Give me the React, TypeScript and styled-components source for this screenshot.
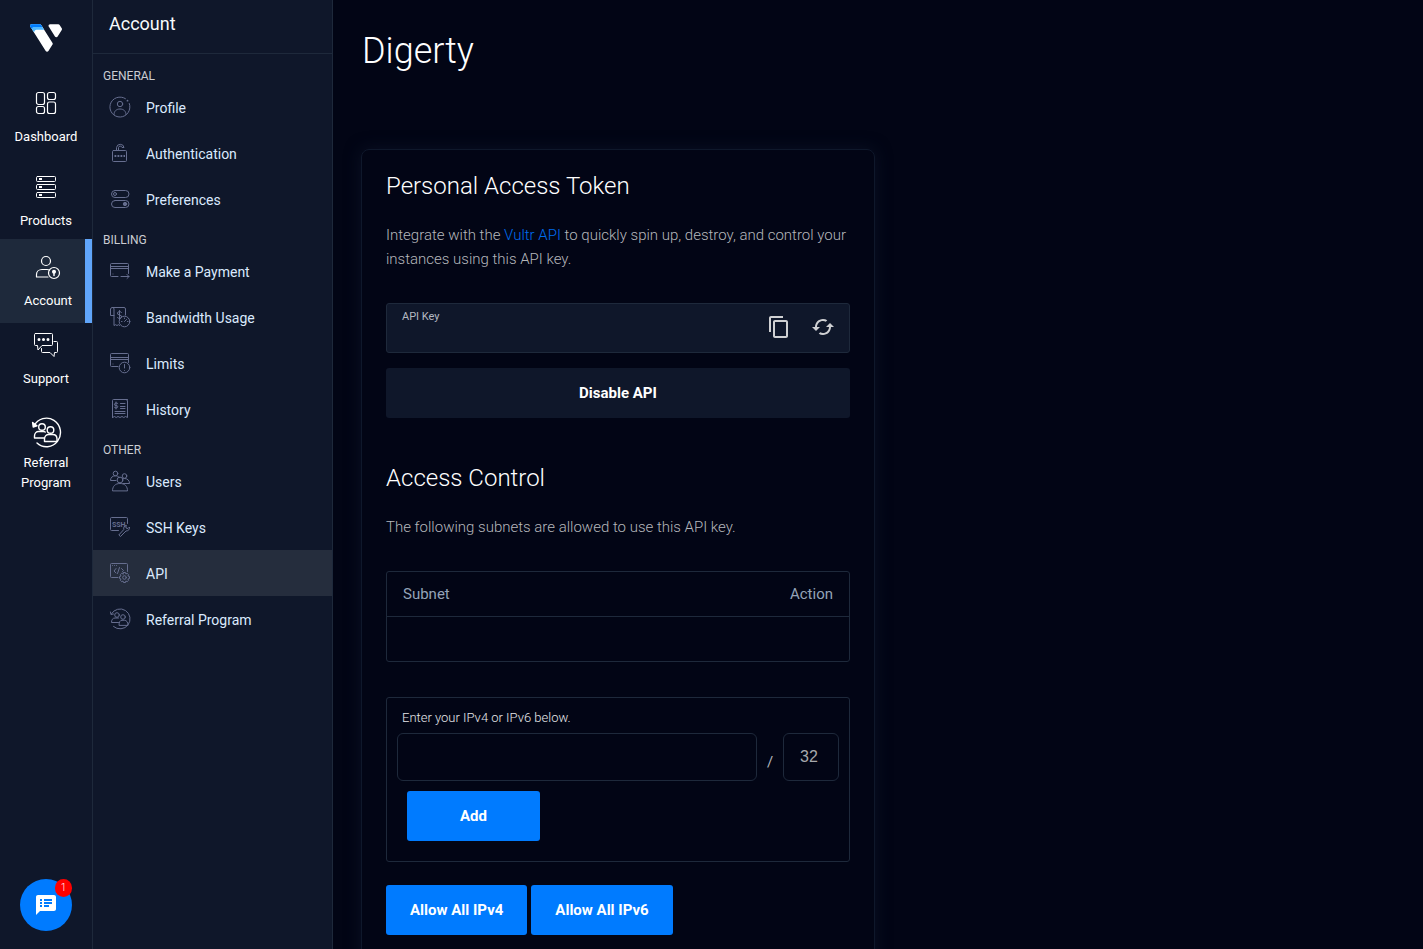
import React from "react";
import styled, { createGlobalStyle, css } from "styled-components";
import { MdCached, MdContentCopy, MdSpeakerNotes } from "react-icons/md";

const color = {
  page: "#020515",
  panel: "#0f172a",
  line: "#1e293b",
  active: "#252d3d",
  primary: "#007bff",
  heading: "#ffffff",
  body: "#b5b7bc",
  muted: "#94a3b8",
  navText: "#dbeafe",
  icon: "#666e8f",
};

const GlobalStyle = createGlobalStyle`
  *, *::before, *::after { box-sizing: border-box; }
  html, body { margin: 0; background: ${color.page}; }
  body { font-family: Roboto, "Liberation Sans", sans-serif; color: ${color.body}; }
  button, input { font-family: inherit; }
  h1, h2, h3, p, ul { margin: 0; padding: 0; }
  ul { list-style: none; }
`;

const Shell = styled.div`
  display: flex;
  height: 100vh;
  overflow: hidden;
`;

const Rail = styled.nav`
  display: flex;
  flex-direction: column;
  flex: none;
  width: 93px;
  padding-bottom: 18px;
  background: ${color.panel};
  border-right: 1px solid ${color.line};
`;

const LogoLink = styled.a`
  display: flex;
  justify-content: center;
  height: 71px;
  padding-top: 24px;
`;

const RailLink = styled.a<{ $top: number; $gap: number; $active?: boolean }>`
  display: flex;
  flex-direction: column;
  align-items: center;
  gap: ${(p) => p.$gap}px;
  min-height: 84px;
  padding-top: ${(p) => p.$top}px;
  color: #fff;
  font-size: 13px;
  line-height: 20px;
  text-align: center;
  text-decoration: none;
  ${(p) =>
    p.$active &&
    css`
      padding-left: 11px;
      background: ${color.line};
      border-right: 7px solid #60a5fa;
    `}
`;

const RailIcon = styled.svg`
  display: block;
  width: 32px;
  height: 32px;
  fill: none;
  stroke: #fff;
  stroke-linecap: round;
  stroke-linejoin: round;
`;

const RailLabel = styled.span`
  max-width: 64px;
`;

const ChatButton = styled.button`
  position: relative;
  display: grid;
  place-items: center;
  width: 52px;
  height: 52px;
  margin: auto auto 0;
  padding: 0;
  border: 0;
  border-radius: 50%;
  background: ${color.primary};
  color: #fff;
`;

const ChatBadge = styled.span`
  position: absolute;
  top: 0;
  right: 0;
  width: 17px;
  height: 18px;
  border-radius: 9px;
  background: #f00;
  font-size: 10px;
  font-weight: 300;
  line-height: 18px;
  text-align: center;
`;

const Sidebar = styled.aside`
  flex: none;
  width: 240px;
  background: ${color.panel};
  border-right: 1px solid ${color.line};
`;

const SidebarTitle = styled.h2`
  height: 54px;
  margin-bottom: 4px;
  padding: 12px 16px 0;
  border-bottom: 1px solid ${color.line};
  color: #f8fafc;
  font-size: 18px;
  font-weight: 400;
  line-height: 24px;
`;

const SectionLabel = styled.h3`
  height: 26px;
  padding: 9px 10px 0;
  color: #cbcdd2;
  font-size: 12px;
  font-weight: 400;
  line-height: 18px;
`;

const SideLink = styled.a<{ $active?: boolean }>`
  display: flex;
  align-items: center;
  gap: 15px;
  height: 46px;
  padding: 0 16px;
  background: ${(p) => (p.$active ? color.active : "transparent")};
  color: ${color.navText};
  font-size: 14px;
  line-height: 20px;
  text-decoration: none;
`;

const SideLabel = styled.span`
  padding-top: 2px;
`;

const SideIcon = styled.svg`
  flex: none;
  width: 22px;
  height: 22px;
  fill: none;
  stroke: ${color.icon};
  stroke-linecap: round;
  stroke-linejoin: round;
`;

const IconText = styled.text`
  fill: ${color.icon};
  stroke: none;
  font-family: Roboto, sans-serif;
  font-weight: 700;
`;

const Main = styled.main`
  flex: 1;
  min-width: 0;
  padding: 28px;
  overflow-y: auto;
  scrollbar-width: none;
`;

const PageTitle = styled.h1`
  margin-bottom: 75px;
  padding-left: 1px;
  color: ${color.heading};
  font-size: 36px;
  font-weight: 300;
  line-height: 46px;
`;

const Columns = styled.div`
  display: grid;
  grid-template-columns: 1fr 1fr;
  gap: 6px;
`;

const Card = styled.section`
  padding: 20px 24px 32px;
  border: 1px solid #0f182b;
  border-radius: 8px;
  box-shadow: 0 0 16px #0a1124;
`;

const CardTitle = styled.h2`
  margin-bottom: 21px;
  color: ${color.heading};
  font-size: 24px;
  font-weight: 300;
  line-height: 32px;
`;

const Copy = styled.p`
  margin-bottom: 32px;
  font-size: 15px;
  font-weight: 300;
  line-height: 24px;
`;

const TextLink = styled.a`
  color: #006cee;
  text-decoration: none;
`;

const KeyBox = styled.div`
  display: flex;
  align-items: center;
  height: 50px;
  margin-bottom: 15px;
  padding: 0 14px 0 15px;
  background: ${color.panel};
  border: 1px solid ${color.line};
  border-radius: 3px;
`;

const KeyField = styled.div`
  display: flex;
  flex: 1;
  flex-direction: column;
  min-width: 0;
`;

const KeyLabel = styled.label`
  color: #b4b9c2;
  font-size: 11px;
  line-height: 16px;
`;

const KeyInput = styled.input`
  height: 22px;
  padding: 0;
  border: 0;
  outline: 0;
  background: transparent;
  color: #fff;
  font-size: 14px;
`;

const KeyActions = styled.div`
  display: flex;
  gap: 20px;
  padding-bottom: 2px;
`;

const IconButton = styled.button`
  display: grid;
  place-items: center;
  width: 24px;
  height: 24px;
  padding: 0;
  border: 0;
  background: transparent;
  color: #cfd0d3;
`;

const Button = styled.button<{ $variant?: "dark"; $wide?: boolean }>`
  height: 50px;
  min-width: 133px;
  padding: 0 24px;
  border: 0;
  border-radius: 3px;
  background: ${(p) => (p.$variant === "dark" ? color.panel : color.primary)};
  color: #fff;
  font-size: 15px;
  font-weight: 700;
  width: ${(p) => (p.$wide ? "100%" : "auto")};
  margin-bottom: ${(p) => (p.$wide ? "44px" : "0")};
`;

const SubnetTable = styled.table`
  width: 100%;
  margin-bottom: 35px;
  border: 1px solid ${color.line};
  border-radius: 3px;
  border-spacing: 0;
`;

const HeadCell = styled.th<{ $end?: boolean }>`
  height: 45px;
  padding: 0 16px;
  border-bottom: 1px solid ${color.line};
  color: ${color.muted};
  font-size: 15px;
  font-weight: 400;
  text-align: ${(p) => (p.$end ? "right" : "left")};
`;

const BodyCell = styled.td`
  height: 44px;
  padding: 0 16px;
`;

const SubnetForm = styled.form`
  margin-bottom: 23px;
  padding: 10px 10px 20px;
  border: 1px solid ${color.line};
  border-radius: 3px;
`;

const FormLabel = styled.label`
  display: block;
  margin-bottom: 5px;
  padding-left: 5px;
  color: #e6e7ea;
  font-size: 13px;
  font-weight: 300;
  line-height: 20px;
`;

const FieldRow = styled.div`
  display: flex;
  margin-bottom: 10px;
`;

const Field = styled.input<{ $narrow?: boolean }>`
  flex: ${(p) => (p.$narrow ? "none" : "1")};
  width: ${(p) => (p.$narrow ? "56px" : "auto")};
  min-width: 0;
  height: 48px;
  padding: 0 16px;
  border: 1px solid ${color.line};
  border-radius: 6px;
  outline: 0;
  background: transparent;
  color: #a6a8ac;
  font-family: "Liberation Sans", Arial, sans-serif;
  font-size: 16px;
`;

const Slash = styled.span`
  width: 26px;
  padding-top: 10px;
  font-size: 15px;
  line-height: 38px;
  text-align: center;
`;

const FormActions = styled.div`
  padding-left: 10px;
`;

const ButtonRow = styled.div`
  display: flex;
  gap: 4px;
`;

const Logo = () => (
  <svg width="32" height="28" viewBox="0 1.5 24 21" aria-hidden="true">
    <defs>
      <clipPath id="bar">
        <path d="M8.36 2.172A1.194 1.194 0 007.348 1.6H1.2A1.202 1.202 0 000 2.8a1.211 1.211 0 00.182.64l11.6 18.4a1.206 1.206 0 002.035 0l3.075-4.874a1.229 1.229 0 00.182-.64 1.211 1.211 0 00-.182-.642z" />
      </clipPath>
    </defs>
    <g clipPath="url(#bar)">
      <path fill="#fff" d="M0 0h24v24H0z" />
      <path fill="#51b9ff" d="M0 0h24v5.9H4.800q-1.200 0-1.500 1.200l-.6.8H0z" />
      <path fill="#007bfc" d="M0 0h24v3.700H2.500q-1 .1-1 1.100l-.3.5H0z" />
    </g>
    <path
      fill="#fff"
      d="M18.709 10.852a1.206 1.206 0 002.035 0L21.8 9.178l2.017-3.2a1.211 1.211 0 00.183-.64 1.211 1.211 0 00-.182-.64l-1.6-2.526a1.206 1.206 0 00-1.015-.571h-6.148a1.202 1.202 0 00-1.2 1.2 1.211 1.211 0 00.182.64z"
    />
  </svg>
);

const DashboardArt = () => (
  <g strokeWidth="1.2">
    <rect x="6.5" y="5.5" width="8" height="12" rx="2" />
    <rect x="6.5" y="19.500" width="8" height="7" rx="2" />
    <rect x="17.5" y="5.5" width="8" height="7" rx="2" />
    <rect x="17.5" y="15" width="8" height="11.500" rx="2" />
  </g>
);

const ProductsArt = () => (
  <>
    {[5.5, 13.5, 21.5].map((y) => (
      <g key={y}>
        <rect x="6.5" y={y} width="19" height="5" rx="1" />
        <path d={`M9 ${y + 2.5}h3`} strokeWidth="2" strokeLinecap="butt" />
      </g>
    ))}
  </>
);

const AccountArt = () => (
  <g strokeWidth="1.2">
    <circle cx="14" cy="10" r="4.5" />
    <path d="M16 26H4.5v-2.5c0-3 2.5-5 5.5-5h5c1 0 1.8.2 2.5.6" />
    <circle cx="22" cy="22" r="5.5" />
    <circle cx="22" cy="20.8" r="1.400" fill="#fff" />
    <path d="M22 21v3.5" strokeWidth="1.500" />
  </g>
);

const SupportArt = () => (
  <>
    <path d="M5.5 4.5h16q1 0 1 1v10q0 1-1 1h-9.500l-4 4.5-.5-4.500h-2q-1 0-1-1v-10q0-1 1-1z" />
    <path d="M24 12.5h2.5q1 0 1 1v9q0 1-1 1h-2l-.5 4-4-4h-7.500q-1 0-1-1v-3" />
    <path d="M9 10.5h.01M13.5 10.5h.01M18 10.5h.01" strokeWidth="3" />
  </>
);

const ReferralRailArt = () => (
  <g strokeWidth="1.400">
    <path d="M4 9A14 14.3 0 1 1 7 26" />
    <path fill="#fff" d="M2.600 5.500l.6 4.500 3.800-1.200z" />
    <circle cx="12" cy="10" r="3.3" />
    <circle cx="20.5" cy="13" r="3.3" />
    <path d="M14 21H4.5v-2c0-3 2-4.500 4-4.500h5q1 0 1.700.5" />
    <path d="M14.5 24.5v-2.500c0-2.800 2-4.500 4.200-4.500h4c2.500 0 4.300 1.700 4.300 4.500v2.500z" />
  </g>
);

const ProfileArt = () => (
  <>
    <path d="M16.5 2.7A10 10 0 1 0 20.3 7.5" />
    <path d="M18.5 4.7h.01" strokeWidth="1.8" />
    <circle cx="11" cy="8" r="2.7" />
    <path d="M5 18.5c0-3.500 2.500-5.500 6-5.500s6 2 6 5.500" />
  </>
);

const AuthArt = () => (
  <>
    <rect x="3.5" y="8.5" width="14" height="11" rx="1" />
    <path d="M7.5 8.5V5.500a3.800 3.800 0 0 1 7.500 0h-2a1.800 1.800 0 0 0-3.500 0v3" />
    <path d="M5.5 14h1.800M8.500 14h1.800M11.500 14h1.800M14.500 14h1.500" strokeWidth="1.800" strokeLinecap="butt" />
  </>
);

const PreferencesArt = () => (
  <>
    <rect x="2.5" y="2.5" width="17.500" height="7" rx="3.500" />
    <rect x="2.5" y="12.5" width="17.500" height="7" rx="3.500" />
    <circle cx="6" cy="6" r="1.500" />
    <circle cx="16" cy="16" r="1.700" fill={color.icon} />
  </>
);

const PaymentArt = () => (
  <>
    <path d="M9 16.5H2.500q-1 0-1-1v-11q0-1 1-1h16q1 0 1 1v9" />
    <path d="M1.5 6.500h18M1.500 8.500h18M4 14h.01M12 16.500h8M18 14.500l2 2-2 2" />
  </>
);

const BandwidthArt = () => (
  <>
    <path d="M10.5 19.500l-1-.8-1.500.8-1.500-.8-1.500.8V3q0-1.500-1.500-1.500T1.500 3v6.500H5M3 1.500h12q1.500 0 1.500 1.500v6" />
    <path d="M10.500 4.500v9M12.500 6.500q-.5-1-2-1t-2 1.500 2 2 2 2-2 1.500-2-1" />
    <circle cx="15.500" cy="15.500" r="5.300" />
    <path d="M15.500 15.500l2-2M12.500 15.500h.5M15.500 12v.5M18.500 15.500h.5" />
  </>
);

const LimitsArt = () => (
  <>
    <path d="M9 14.500H2.500q-1 0-1-1v-11q0-1 1-1h16q1 0 1 1v8" />
    <path d="M1.500 5.500h18M1.500 7.500h18M4 12h.01" />
    <circle cx="15.500" cy="15.500" r="5.300" />
    <path d="M15.500 12.500v3.500M15.500 18.500v.01" />
  </>
);

const HistoryArt = () => (
  <>
    <path d="M3.500 19.500V2.500q0-1 1-1h14M17 1.500q1.500 0 1.500 1.500v16.500l-2-1-1.700 1-1.800-1-2 1-2-1-1.800 1-1.700-1-2 1" />
    <path d="M7 4v7M8.800 5.500Q8.200 5 7 5T5.400 6.200 7 7.500t1.800 1.300T7 10t-1.700-.8" />
    <path d="M11.500 5.500h4.500M11.500 8.500h4.500M11.500 10.500h4.500M6 13.500h10M6 15.500h10" />
  </>
);

const UsersArt = () => (
  <>
    <circle cx="6.500" cy="3.500" r="2.300" />
    <circle cx="15.500" cy="6" r="2.300" />
    <circle cx="11" cy="10" r="2.900" />
    <path d="M7 10.500H1.500c0-3 2-4.700 5-4.700 1.800 0 3 .7 3.800 1.700M14 13.500h6.500c0-3-2-5-5-5-1 0-1.500.1-2 .4" />
    <path d="M3.500 20.500c0-4 2.500-7 7.500-7s7.500 3 7.500 7z" />
  </>
);

const SshArt = () => (
  <>
    <path d="M9.500 14.500H2.500q-1 0-1-1v-11q0-1 1-1h15q1 0 1 1v5" />
    <IconText x="3" y="11" fontSize="7">SSH</IconText>
    <path d="M17 9.500v2.500l2 .5 1.500-1.500c.5 2-1 4-3.500 4l-5.500 5.500-1.700-1.500 5-5.500c-.5-2 .5-3.500 2.200-4z" />
  </>
);

const ApiArt = () => (
  <>
    <path d="M9 15.500H2.500q-1 0-1-1v-12q0-1 1-1h15q1 0 1 1v7" />
    <path d="M3.500 3.500h.01M5.500 3.500h.01M7.500 3.500h.01M7 6.500L5 9l2 2M10.500 5.500l-2 6M12.500 6.500L14.500 8.500l-1 1" />
    <circle cx="15.500" cy="15.500" r="1.800" />
    <path d="M14.500 10.500h2l.4 1.500 1.300-.7 1.400 1.400-.7 1.300 1.600.5v2l-1.600.5.7 1.300-1.400 1.400-1.300-.7-.4 1.500h-2l-.5-1.500-1.300.7-1.400-1.400.7-1.300-1.500-.5v-2l1.500-.5-.7-1.300 1.400-1.400 1.300.7z" />
  </>
);

const ReferralArt = () => (
  <>
    <path d="M2.300 6A10 10 0 1 1 4.500 18.500" />
    <path d="M1.500 4l.5 2.500 2.500-.5" />
    <circle cx="8" cy="7" r="2.300" />
    <circle cx="14" cy="9" r="2.300" />
    <path d="M9.500 14.500H2.500c0-2.500 1-4.500 3.500-4.500h3.500M10 17c0-3 1-4.700 3-4.700h2.500c2 0 3.500 1.700 3.500 4.700z" />
  </>
);

type RailEntry = { label: string; art: React.FC; top: number; gap: number; active?: boolean };

const railEntries: RailEntry[] = [
  { label: "Dashboard", art: DashboardArt, top: 16, gap: 8 },
  { label: "Products", art: ProductsArt, top: 16, gap: 8 },
  { label: "Account", art: AccountArt, top: 12, gap: 8, active: true },
  { label: "Support", art: SupportArt, top: 6, gap: 8 },
  { label: "Referral Program", art: ReferralRailArt, top: 10, gap: 4 },
];

type SideEntry = { label: string; art: React.FC; active?: boolean };

const sections: { title: string; entries: SideEntry[] }[] = [
  {
    title: "GENERAL",
    entries: [
      { label: "Profile", art: ProfileArt },
      { label: "Authentication", art: AuthArt },
      { label: "Preferences", art: PreferencesArt },
    ],
  },
  {
    title: "BILLING",
    entries: [
      { label: "Make a Payment", art: PaymentArt },
      { label: "Bandwidth Usage", art: BandwidthArt },
      { label: "Limits", art: LimitsArt },
      { label: "History", art: HistoryArt },
    ],
  },
  {
    title: "OTHER",
    entries: [
      { label: "Users", art: UsersArt },
      { label: "SSH Keys", art: SshArt },
      { label: "API", art: ApiArt, active: true },
      { label: "Referral Program", art: ReferralArt },
    ],
  },
];

export default function App() {
  return (
    <>
      <GlobalStyle />
      <Shell>
        <Rail aria-label="Main">
          <LogoLink href="#" aria-label="Home">
            <Logo />
          </LogoLink>
          {railEntries.map(({ label, art: Art, top, gap, active }) => (
            <RailLink key={label} href="#" $top={top} $gap={gap} $active={active}>
              <RailIcon viewBox="0 0 32 32" aria-hidden="true">
                <Art />
              </RailIcon>
              <RailLabel>{label}</RailLabel>
            </RailLink>
          ))}
          <ChatButton type="button" aria-label="Open chat">
            <MdSpeakerNotes size={24} />
            <ChatBadge>1</ChatBadge>
          </ChatButton>
        </Rail>

        <Sidebar>
          <SidebarTitle>Account</SidebarTitle>
          {sections.map((section) => (
            <section key={section.title}>
              <SectionLabel>{section.title}</SectionLabel>
              <ul>
                {section.entries.map(({ label, art: Art, active }) => (
                  <li key={label}>
                    <SideLink href="#" $active={active}>
                      <SideIcon viewBox="0 0 22 22" aria-hidden="true">
                        <Art />
                      </SideIcon>
                      <SideLabel>{label}</SideLabel>
                    </SideLink>
                  </li>
                ))}
              </ul>
            </section>
          ))}
        </Sidebar>

        <Main>
          <PageTitle>Digerty</PageTitle>
          <Columns>
            <Card>
              <CardTitle>Personal Access Token</CardTitle>
              <Copy>
                Integrate with the <TextLink href="#">Vultr API</TextLink> to quickly spin up,
                destroy, and control your instances using this API key.
              </Copy>
              <KeyBox>
                <KeyField>
                  <KeyLabel htmlFor="api-key">API Key</KeyLabel>
                  <KeyInput id="api-key" type="text" readOnly />
                </KeyField>
                <KeyActions>
                  <IconButton type="button" aria-label="Copy API key">
                    <MdContentCopy size={24} />
                  </IconButton>
                  <IconButton type="button" aria-label="Regenerate API key">
                    <MdCached size={24} />
                  </IconButton>
                </KeyActions>
              </KeyBox>
              <Button type="button" $variant="dark" $wide>
                Disable API
              </Button>

              <CardTitle>Access Control</CardTitle>
              <Copy>The following subnets are allowed to use this API key.</Copy>
              <SubnetTable>
                <thead>
                  <tr>
                    <HeadCell scope="col">Subnet</HeadCell>
                    <HeadCell scope="col" $end>
                      Action
                    </HeadCell>
                  </tr>
                </thead>
                <tbody>
                  <tr>
                    <BodyCell />
                    <BodyCell />
                  </tr>
                </tbody>
              </SubnetTable>
              <SubnetForm>
                <FormLabel htmlFor="subnet">Enter your IPv4 or IPv6 below.</FormLabel>
                <FieldRow>
                  <Field id="subnet" type="text" />
                  <Slash>/</Slash>
                  <Field aria-label="Prefix length" type="text" defaultValue="32" $narrow />
                </FieldRow>
                <FormActions>
                  <Button type="button">Add</Button>
                </FormActions>
              </SubnetForm>
              <ButtonRow>
                <Button type="button">Allow All IPv4</Button>
                <Button type="button">Allow All IPv6</Button>
              </ButtonRow>
            </Card>
          </Columns>
        </Main>
      </Shell>
    </>
  );
}
